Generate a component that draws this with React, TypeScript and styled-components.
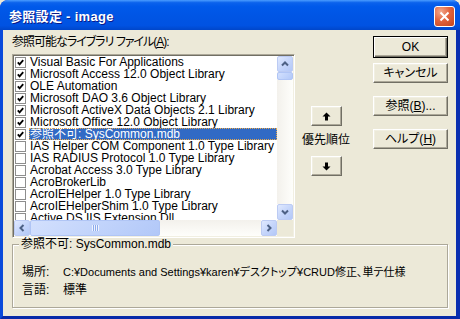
import React from 'react';
import styled, { createGlobalStyle, css } from 'styled-components';

const GlobalStyle = createGlobalStyle`
    html, body {
        margin: 0;
        padding: 0;
        background: #ece9d8;
    }
    body {
        font-family: "Liberation Sans", "Noto Sans CJK JP", sans-serif;
        font-size: 12px;
        color: #000;
        font-feature-settings: "palt";
    }
`;

const uiFont = css`
    font-family: "Liberation Sans", "Noto Sans CJK JP", sans-serif;
    font-size: 12px;
    line-height: 12px;
    font-feature-settings: "palt";
`;

const Window = styled.div`
    width: 460px;
    height: 319px;
    display: flex;
    flex-direction: column;
    background: #0831d9;
    border-radius: 8px 8px 0 0;
    overflow: hidden;
`;

const TitleBar = styled.div`
    flex: none;
    height: 30px;
    display: flex;
    align-items: center;
    padding: 0 5px 0 9px;
    box-sizing: border-box;
    background: linear-gradient(
        to bottom,
        #4a9cff 0%,
        #0b62ec 9%,
        #0059ea 22%,
        #0055e4 55%,
        #0052e2 85%,
        #0046c9 100%
    );
`;

const Title = styled.span`
    font-family: "Liberation Sans", "Noto Sans CJK JP", sans-serif;
    font-size: 13px;
    font-weight: 700;
    color: #fff;
    text-shadow: 1px 1px 0 #0a1a8a;
    letter-spacing: 0.3px;
`;

const CloseButton = styled.div`
    margin: 2px 0 0 auto;
    width: 21px;
    height: 21px;
    box-sizing: border-box;
    border: 1px solid #fff;
    border-radius: 3px;
    background: radial-gradient(circle at 30% 25%, #f2a98d 0%, #e2643f 45%, #c2441c 100%);
    display: flex;
    align-items: center;
    justify-content: center;
`;

const Frame = styled.div`
    flex: 1;
    display: flex;
    flex-direction: column;
    border-style: solid;
    border-width: 0 4px 3px 3px;
    border-color: #0843d0 #0a2fb0 #072aa8 #0a4adb;
    background: #ece9d8;
    padding: 6px 8px 8px 9px;
    min-height: 0;
`;

const TopRow = styled.div`
    flex: none;
    height: 202px;
    display: flex;
`;

const LeftCol = styled.div`
    width: 283px;
    display: flex;
    flex-direction: column;
`;

const FieldLabel = styled.div`
    ${uiFont}
    height: 12px;
    margin-bottom: 6px;
    white-space: nowrap;
    letter-spacing: -1px;
`;

const ListBox = styled.div`
    width: 283px;
    height: 184px;
    box-sizing: border-box;
    border: 1px solid;
    border-color: #aca899 #fff #fff #aca899;
    box-shadow: inset 1px 1px 0 #716f64, inset -1px -1px 0 #f1efe2;
    padding: 1px;
    background: #fff;
    display: grid;
    grid-template-columns: 1fr 16px;
    grid-template-rows: 1fr 16px;
`;

const Rows = styled.div`
    overflow: hidden;
    min-width: 0;
`;

const Row = styled.div`
    ${uiFont}
    height: 12px;
    display: flex;
    align-items: center;
    white-space: nowrap;
`;

const CheckBox = styled.span`
    flex: none;
    width: 11px;
    height: 11px;
    box-sizing: border-box;
    margin: 0 3px 0 1px;
    border: 1px solid #8e8e8e;
    background: #fff;
    display: flex;
    align-items: center;
    justify-content: center;
`;

const ItemText = styled.span<{ $selected?: boolean }>`
    flex: 1;
    height: 12px;
    line-height: 12px;
    padding-left: 1px;
    ${(p) =>
        p.$selected &&
        css`
            background: #316ac5;
            color: #fff;
            outline: 1px dotted #e8a84a;
            outline-offset: -1px;
        `}
`;

const VScroll = styled.div`
    display: flex;
    flex-direction: column;
`;

const HScroll = styled.div`
    display: flex;
    min-width: 0;
`;

const Corner = styled.div`
    background: #ece9d8;
`;

const ScrollArrow = styled.div`
    flex: none;
    width: 16px;
    height: 16px;
    box-sizing: border-box;
    border: 1px solid #bccbf3;
    border-radius: 2px;
    background: linear-gradient(135deg, #e0e9fe 0%, #c6d6fb 50%, #b3c8f7 100%);
    display: flex;
    align-items: center;
    justify-content: center;
`;

const Track = styled.div<{ $vertical?: boolean }>`
    flex: 1;
    display: flex;
    flex-direction: ${(p) => (p.$vertical ? 'column' : 'row')};
    background: linear-gradient(
        ${(p) => (p.$vertical ? 'to right' : 'to bottom')},
        #f3f1ec,
        #fefefb
    );
`;

const Thumb = styled.div<{ $size: number; $vertical?: boolean }>`
    flex: none;
    box-sizing: border-box;
    ${(p) =>
        p.$vertical
            ? css`
                  width: 16px;
                  height: ${p.$size}px;
              `
            : css`
                  height: 16px;
                  width: ${p.$size}px;
              `}
    border: 1px solid #b0c5f5;
    border-radius: 2px;
    background: linear-gradient(135deg, #d3e0fd 0%, #c2d4fb 50%, #b2c8f8 100%);
    display: flex;
    align-items: center;
    justify-content: center;
`;

const Grip = styled.span`
    width: 7px;
    height: 6px;
    background: repeating-linear-gradient(
        to right,
        #eef3fe 0 1px,
        #8eacec 1px 2px
    );
`;

const MiddleCol = styled.div`
    width: 56px;
    margin-left: 3px;
    padding-top: 70px;
    display: flex;
    flex-direction: column;
    align-items: center;
`;

const OrderLabel = styled.div`
    ${uiFont}
    margin: 8px 0 10px;
    white-space: nowrap;
`;

const RightCol = styled.div`
    width: 75px;
    margin-left: auto;
    display: flex;
    flex-direction: column;
`;

const PushButton = styled.button<{ $default?: boolean; $gap?: number; $width?: number }>`
    ${uiFont}
    flex: none;
    width: ${(p) => p.$width ?? 75}px;
    height: 20px;
    margin: ${(p) => p.$gap ?? 0}px 0 0;
    padding: 0;
    color: #000;
    background: #ece9d8;
    border: 1px solid;
    border-color: #fff #716f64 #716f64 #fff;
    box-shadow: inset -1px -1px 0 #aca899, inset 1px 1px 0 #f1efe2;
    display: flex;
    align-items: center;
    justify-content: center;
    ${(p) =>
        p.$default &&
        css`
            height: 22px;
            border: 1px solid #000;
            box-shadow: inset 1px 1px 0 #fff, inset -1px -1px 0 #716f64,
                inset -2px -2px 0 #aca899;
        `}
`;

const GroupBox = styled.fieldset`
    flex: 1;
    margin: 0;
    padding: 0;
    min-width: 0;
    border: 1px solid #aca899;
    box-shadow: 1px 1px 0 #fff, inset 1px 1px 0 #fff;
`;

const GroupTitle = styled.legend`
    ${uiFont}
    margin-left: 6px;
    padding: 0 2px;
    background: #ece9d8;
    white-space: nowrap;
`;

const InfoGrid = styled.div`
    display: grid;
    grid-template-columns: 41px 1fr;
    row-gap: 6px;
    padding: 16px 0 0 9px;
`;

const InfoCell = styled.span<{ $compact?: boolean }>`
    ${uiFont}
    white-space: nowrap;
    ${(p) =>
        p.$compact &&
        css`
            font-size: 11px;
        `}
`;

const CheckMark = () => (
    <svg width='7' height='7' viewBox='0 0 7 7'>
        <polyline points='0.8,3.4 2.6,5.4 6.2,1.2' fill='none' stroke='#000' strokeWidth='1.8' />
    </svg>
);

const Chevron = ({ dir }: { dir: 'up' | 'down' | 'left' | 'right' }) => {
    const rot = { up: 0, right: 90, down: 180, left: 270 }[dir];
    return (
        <svg width='8' height='8' viewBox='0 0 8 8'>
            <polyline
                points='1,5.5 4,2.5 7,5.5'
                fill='none'
                stroke='#4d6185'
                strokeWidth='2'
                transform={`rotate(${rot} 4 4)`}
            />
        </svg>
    );
};

const BlackArrow = ({ down }: { down?: boolean }) => (
    <svg width='9' height='9' viewBox='0 0 9 9'>
        <path
            d='M4.5 0.5 L8.5 4.5 L6 4.5 L6 8.5 L3 8.5 L3 4.5 L0.5 4.5 Z'
            fill='#000'
            transform={down ? 'rotate(180 4.5 4.5)' : undefined}
        />
    </svg>
);

const CloseIcon = () => (
    <svg width='11' height='11' viewBox='0 0 11 11'>
        <path d='M1.5 1.5 L9.5 9.5 M9.5 1.5 L1.5 9.5' stroke='#fff' strokeWidth='2' />
    </svg>
);

const libraries = [
    { name: 'Visual Basic For Applications', checked: true },
    { name: 'Microsoft Access 12.0 Object Library', checked: true },
    { name: 'OLE Automation', checked: true },
    { name: 'Microsoft DAO 3.6 Object Library', checked: true },
    { name: 'Microsoft ActiveX Data Objects 2.1 Library', checked: true },
    { name: 'Microsoft Office 12.0 Object Library', checked: true },
    { name: '参照不可: SysCommon.mdb', checked: true, selected: true },
    { name: 'IAS Helper COM Component 1.0 Type Library' },
    { name: 'IAS RADIUS Protocol 1.0 Type Library' },
    { name: 'Acrobat Access 3.0 Type Library' },
    { name: 'AcroBrokerLib' },
    { name: 'AcroIEHelper 1.0 Type Library' },
    { name: 'AcroIEHelperShim 1.0 Type Library' },
    { name: 'Active DS IIS Extension Dll' },
];

export default function App() {
    return (
        <>
            <GlobalStyle />
            <Window>
                <TitleBar>
                    <Title>参照設定 - image</Title>
                    <CloseButton>
                        <CloseIcon />
                    </CloseButton>
                </TitleBar>
                <Frame>
                    <TopRow>
                        <LeftCol>
                            <FieldLabel>
                                参照可能なライブラリ ファイル(<u>A</u>):
                            </FieldLabel>
                            <ListBox>
                                <Rows>
                                    {libraries.map((lib) => (
                                        <Row key={lib.name}>
                                            <CheckBox>{lib.checked && <CheckMark />}</CheckBox>
                                            <ItemText $selected={lib.selected}>{lib.name}</ItemText>
                                        </Row>
                                    ))}
                                </Rows>
                                <VScroll>
                                    <ScrollArrow>
                                        <Chevron dir='up' />
                                    </ScrollArrow>
                                    <Track $vertical>
                                        <Thumb $vertical $size={8} />
                                    </Track>
                                    <ScrollArrow>
                                        <Chevron dir='down' />
                                    </ScrollArrow>
                                </VScroll>
                                <HScroll>
                                    <ScrollArrow>
                                        <Chevron dir='left' />
                                    </ScrollArrow>
                                    <Track>
                                        <Thumb $size={130}>
                                            <Grip />
                                        </Thumb>
                                    </Track>
                                    <ScrollArrow>
                                        <Chevron dir='right' />
                                    </ScrollArrow>
                                </HScroll>
                                <Corner />
                            </ListBox>
                        </LeftCol>
                        <MiddleCol>
                            <PushButton $width={31}>
                                <BlackArrow />
                            </PushButton>
                            <OrderLabel>優先順位</OrderLabel>
                            <PushButton $width={31}>
                                <BlackArrow down />
                            </PushButton>
                        </MiddleCol>
                        <RightCol>
                            <PushButton $default>OK</PushButton>
                            <PushButton $gap={5}>キャンセル</PushButton>
                            <PushButton $gap={13}>
                                参照(<u>B</u>)...
                            </PushButton>
                            <PushButton $gap={13}>
                                ヘルプ(<u>H</u>)
                            </PushButton>
                        </RightCol>
                    </TopRow>
                    <GroupBox>
                        <GroupTitle>参照不可: SysCommon.mdb</GroupTitle>
                        <InfoGrid>
                            <InfoCell>場所:</InfoCell>
                            <InfoCell $compact>
                                C:¥Documents and Settings¥karen¥デスクトップ¥CRUD修正、単テ仕様
                            </InfoCell>
                            <InfoCell>言語:</InfoCell>
                            <InfoCell>標準</InfoCell>
                        </InfoGrid>
                    </GroupBox>
                </Frame>
            </Window>
        </>
    );
}
